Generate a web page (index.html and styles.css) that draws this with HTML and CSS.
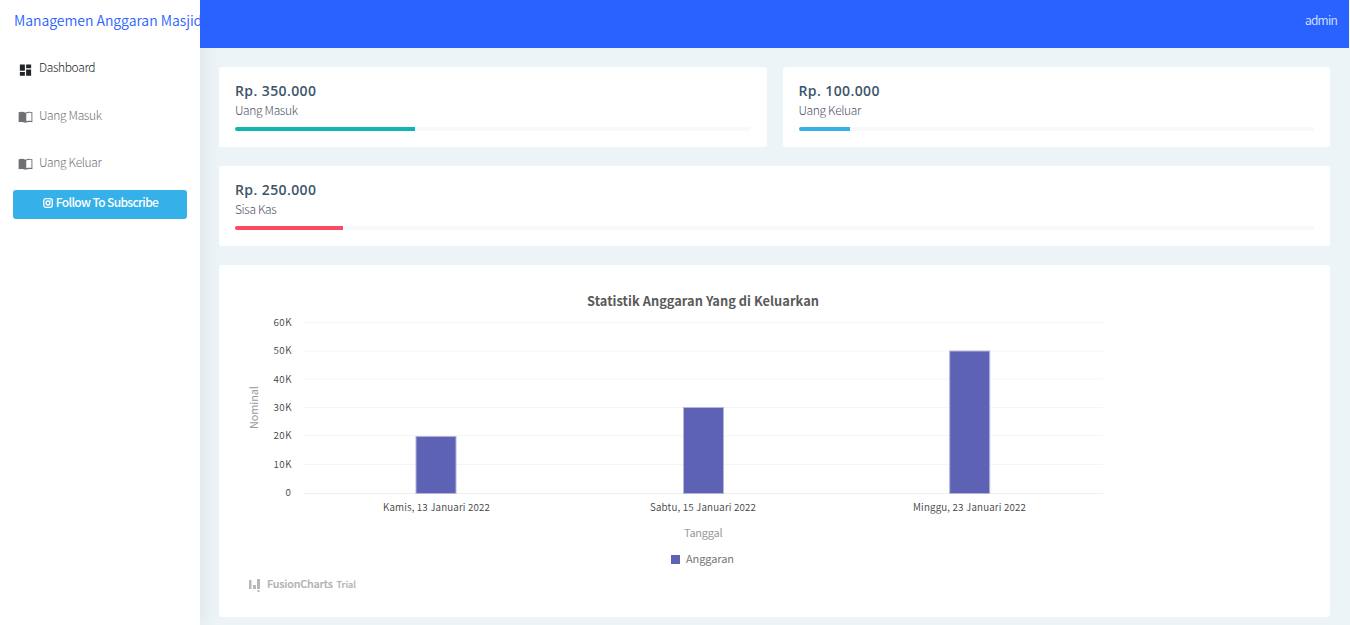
FILE: index.html
```html
<!DOCTYPE html>
<html lang="id">
<head>
<meta charset="utf-8">
<title>Managemen Anggaran Masjid</title>
<link rel="stylesheet" href="styles.css">
</head>
<body>
<div class="app">
  <aside class="sidebar">
    <div class="brand"><span>Managemen Anggaran Masjid</span></div>
    <nav class="nav">
      <a class="nav-item active"><svg class="nav-icon" viewBox="0 0 24 24"><path d="M3 13h8V3H3v10zm0 8h8v-6H3v6zm10 0h8V11h-8v10zm0-18v6h8V3h-8z"/></svg><span>Dashboard</span></a>
      <a class="nav-item"><svg class="nav-icon" viewBox="0 0 24 24"><path d="M1 4.500C4 3.600 9 3.300 12 5 15 3.300 20 3.600 23 4.500V20.500C20 19.500 15 19.500 12 21.200 9 19.500 4 19.500 1 20.500ZM13.200 6.200V18.700C15.500 17.900 18.500 17.700 21.500 18.300V5.700C18.500 5.100 15.500 5.300 13.200 6.200Z" fill-rule="evenodd"/></svg><span>Uang Masuk</span></a>
      <a class="nav-item"><svg class="nav-icon" viewBox="0 0 24 24"><path d="M1 4.500C4 3.600 9 3.300 12 5 15 3.300 20 3.600 23 4.500V20.500C20 19.500 15 19.500 12 21.200 9 19.500 4 19.500 1 20.500ZM13.200 6.200V18.700C15.500 17.900 18.500 17.700 21.500 18.300V5.700C18.500 5.100 15.500 5.300 13.200 6.200Z" fill-rule="evenodd"/></svg><span>Uang Keluar</span></a>
    </nav>
    <a class="subscribe">
      <svg class="insta" viewBox="0 0 12 12"><rect x="1.700" y="1.700" width="8.600" height="8.600" rx="2.200"/><circle cx="6" cy="6" r="2"/><path d="M8.300 3.500h.6"/></svg>
      <span>Follow To Subscribe</span>
    </a>
  </aside>
  <div class="main">
    <header class="topbar"><span>admin</span></header>
    <main class="content">
      <section class="card stat">
        <h4>Rp. 350.000</h4>
        <p>Uang Masuk</p>
        <div class="progress"><div class="bar teal" style="width:35%"></div></div>
      </section>
      <section class="card stat">
        <h4>Rp. 100.000</h4>
        <p>Uang Keluar</p>
        <div class="progress"><div class="bar blue" style="width:10%"></div></div>
      </section>
      <section class="card stat wide">
        <h4>Rp. 250.000</h4>
        <p>Sisa Kas</p>
        <div class="progress"><div class="bar red" style="width:10%"></div></div>
      </section>
      <section class="card chart-card wide">
        <svg class="chart" width="1111" height="352" viewBox="219 265 1111 352">
          <text class="title" x="587" y="306" textLength="232">Statistik Anggaran Yang di Keluarkan</text>
          <g class="grid">
            <path d="M303 322.500h800M303 351h800M303 379h800M303 407.500h800M303 435.500h800M303 464.500h800"/>
            <path class="base" d="M303 493.500h800"/>
          </g>
          <g class="tick">
            <text x="273.500" y="326" textLength="18">60K</text>
            <text x="273.500" y="354" textLength="18">50K</text>
            <text x="273.500" y="383" textLength="18">40K</text>
            <text x="273.500" y="411" textLength="18">30K</text>
            <text x="273.500" y="439" textLength="18">20K</text>
            <text x="273.500" y="468" textLength="18">10K</text>
            <text x="285.500" y="496">0</text>
            <text x="383" y="511" textLength="107">Kamis, 13 Januari 2022</text>
            <text x="650" y="511" textLength="106">Sabtu, 15 Januari 2022</text>
            <text x="913" y="511" textLength="113">Minggu, 23 Januari 2022</text>
          </g>
          <g class="bars">
            <rect x="416" y="436.500" width="40" height="57"/>
            <rect x="683.500" y="407.500" width="40" height="86"/>
            <rect x="949.700" y="351" width="40" height="142.500"/>
          </g>
          <text class="axis" transform="translate(258 429) rotate(-90)" textLength="43">Nominal</text>
          <text class="axis" x="684" y="537" textLength="38.500">Tanggal</text>
          <rect class="key" x="671" y="555" width="9" height="9"/>
          <text class="legend" x="686" y="563" textLength="48">Anggaran</text>
          <path class="mark" d="M249 580h2.500v9H249zM253 585h3v4h-3zM257 579h3v10h-3zM257.500 590h2v2h-2z"/>
          <text class="credit" x="267" y="588" textLength="66">FusionCharts</text>
          <text class="credit small" x="336.500" y="588" textLength="19.500">Trial</text>
        </svg>
      </section>
    </main>
  </div>
</div>
</body>
</html>
```
FILE: styles.css
```css
* { box-sizing: border-box; }
body { margin: 0; background: #ecf4f8; font-family: "Noto Sans CJK SC", "Noto Sans", sans-serif; color: #3e5569; overflow: hidden; }
.app { display: flex; width: 1350px; height: 625px; }
.sidebar { width: 200px; flex: none; background: #fff; box-shadow: 1px 0 20px rgba(0,0,0,.08); z-index: 2; }
.brand { height: 48px; padding: 10px 0 0 14px; overflow: hidden; white-space: nowrap; font-size: 14px; line-height: 20px; color: #2962ff; letter-spacing: -.03px; font-weight: 350; background: #fff; }
.nav { display: flex; flex-direction: column; }
.nav-item { height: 47.500px; padding: 8px 0 0 18px; display: flex; align-items: flex-start; gap: 6px; color: #212529; font-size: 12px; line-height: 22px; opacity: .65; white-space: nowrap; }
.nav-item.active { opacity: 1; }
.nav-item span { font-weight: 300; letter-spacing: -.35px; }
.nav-icon { width: 15px; height: 16px; margin-top: 6px; fill: #212529; }
.nav-item:not(.active) .nav-icon { margin-top: 5px; }
.subscribe { margin: -1px 13px 0; height: 29.500px; border-radius: 3px; background: #36b0e8; color: #fff; display: flex; justify-content: center; gap: 2px; padding-top: 2px; font-size: 12px; line-height: 20px; font-weight: 500; letter-spacing: -.63px; white-space: nowrap; }
.insta { width: 12px; height: 12px; margin-top: 5px; fill: none; stroke: #fff; stroke-width: 1.300; }
.main { width: 1149px; flex: none; }
.topbar { height: 48px; background: #2962ff; display: flex; justify-content: flex-end; padding: 10px 12px 0 0; color: #dfe7ff; font-size: 12px; font-weight: 350; letter-spacing: -.7px; line-height: 20px; position: relative; z-index: 3; }
.content { display: grid; grid-template-columns: 1fr 1fr; column-gap: 16px; row-gap: 19px; padding: 19px 19px 8px 19px; }
.card { background: #fff; border-radius: 3px; }
.wide { grid-column: 1 / -1; }
.stat { height: 80px; padding: 14px 16px; }
.stat h4 { margin: 0; font-family: "Open Sans", "Noto Sans", sans-serif; font-size: 14px; line-height: 20px; font-weight: 600; letter-spacing: .4px; }
.stat p { margin: -1px 0 0; font-size: 12px; line-height: 20px; color: #4f5467; font-weight: 300; letter-spacing: -.35px; }
.progress { height: 4px; margin-top: 7px; border-radius: 2px; background: #f8f9fa; overflow: hidden; }
.bar { height: 4px; }
.teal { background: #0fb5ae; }
.blue { background: #36b0e8; }
.red { background: #fa4b63; }
.chart-card { height: 352px; overflow: hidden; }
.chart { display: block; font-family: "Noto Sans CJK SC", "Noto Sans", sans-serif; }
.title { font-size: 12.800px; font-weight: 700; fill: #5a5a5a; }
.grid path { fill: none; stroke: #f5f5f5; stroke-width: 1; }
.grid .base { stroke: #efefef; }
.tick { font-size: 9.800px; font-weight: 350; fill: #444; }
.bars rect { fill: #5d62b5; stroke: #b4b5dc; stroke-width: 1; }
.axis { font-size: 11px; fill: #999; }
.key { fill: #5d62b5; }
.legend { font-size: 11px; fill: #777; }
.mark { fill: #b5b9ba; }
.credit { font-size: 10.800px; font-weight: 500; fill: #b0b3b6; stroke: #b0b3b6; stroke-width: .2px; }
.small { font-size: 9px; }
```
